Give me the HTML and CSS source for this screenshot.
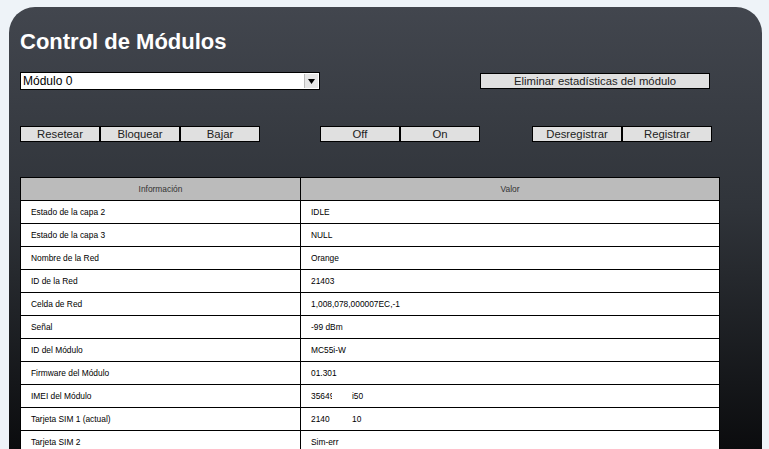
FILE: index.html
```html
<!DOCTYPE html>
<html lang="es">
<head>
<meta charset="utf-8">
<title>Control de Módulos</title>
<link rel="stylesheet" href="styles.css">
</head>
<body>
<div class="panel">
  <h1 class="title">Control de Módulos</h1>
  <div class="row-top">
    <div class="select">
      <span class="select-text">Módulo 0</span>
      <span class="select-btn"><svg width="7" height="5" viewBox="0 0 7 5"><path d="M0 0H7L3.5 5Z" fill="#000"/></svg></span>
    </div>
    <button class="btn btn-wide">Eliminar estadísticas del módulo</button>
  </div>
  <div class="row-btns">
    <div class="group">
      <button class="btn">Resetear</button><button class="btn">Bloquear</button><button class="btn">Bajar</button>
    </div>
    <div class="group g2">
      <button class="btn">Off</button><button class="btn">On</button>
    </div>
    <div class="group g3">
      <button class="btn btn-90">Desregistrar</button><button class="btn btn-90">Registrar</button>
    </div>
  </div>
  <table class="info">
    <thead>
      <tr><th class="c1">Información</th><th>Valor</th></tr>
    </thead>
    <tbody>
      <tr><td>Estado de la capa 2</td><td>IDLE</td></tr>
      <tr><td>Estado de la capa 3</td><td>NULL</td></tr>
      <tr><td>Nombre de la Red</td><td>Orange</td></tr>
      <tr><td>ID de la Red</td><td>21403</td></tr>
      <tr><td>Celda de Red</td><td>1,008,078,000007EC,-1</td></tr>
      <tr><td>Señal</td><td>-99 dBm</td></tr>
      <tr><td>ID del Módulo</td><td>MC55i-W</td></tr>
      <tr><td>Firmware del Módulo</td><td>01.301</td></tr>
      <tr><td>IMEI del Módulo</td><td><span class="cut">35649</span><span class="tail">i50</span></td></tr>
      <tr><td>Tarjeta SIM 1 (actual)</td><td><span class="cut2">2140</span><span class="tail">10</span></td></tr>
      <tr><td>Tarjeta SIM 2</td><td>Sim-err</td></tr>
    </tbody>
  </table>
</div>
</body>
</html>
```
FILE: styles.css
```css
html, body {
  margin: 0;
  padding: 0;
  background: #eef3f8;
  overflow: hidden;
}
body {
  font-family: "Liberation Sans", Arial, sans-serif;
}
.panel {
  margin: 7px 7px 0 9px;
  height: 470px;
  box-sizing: border-box;
  padding: 22px 0 0 11px;
  border-radius: 26px 26px 0 0;
  background: linear-gradient(#42464e 0px, #30343a 200px, #0b0c0e 442px);
}
.title {
  margin: 0;
  font-size: 22px;
  line-height: 25px;
  font-weight: bold;
  color: #fff;
}
.row-top {
  display: flex;
  align-items: flex-start;
  margin-top: 18px;
}
.select {
  width: 300px;
  height: 18px;
  box-sizing: border-box;
  border: 1px solid #000;
  background: #fff;
  display: flex;
  align-items: center;
  justify-content: space-between;
  padding: 0 1px 0 2px;
}
.select-text {
  font-size: 12px;
  color: #000;
}
.select-btn {
  width: 13px;
  height: 14px;
  background: #e6e6e6;
  border-left: 1px solid #bbb;
  display: flex;
  align-items: center;
  justify-content: center;
}
.btn {
  font-family: "Liberation Sans", Arial, sans-serif;
  font-size: 11.3px;
  color: #222;
  background: #e0e0e0;
  border: 1px solid #000;
  width: 80px;
  height: 16px;
  box-sizing: border-box;
  padding: 0;
  margin: 0;
  line-height: 14px;
  display: inline-block;
  vertical-align: top;
}
.btn-wide {
  width: 230px;
  margin-left: 160px;
  margin-top: 1px;
}
.btn-90 {
  width: 90px;
}
.row-btns {
  display: flex;
  margin-top: 36px;
}
.group {
  display: flex;
}
.g2 {
  margin-left: 60px;
}
.g3 {
  margin-left: 52px;
}
.info {
  margin-top: 35px;
  width: 700px;
  border-collapse: collapse;
  background: #fff;
  font-size: 8.4px;
  color: #000;
}
.info th, .info td {
  border: 1px solid #000;
  height: 23px;
  padding: 0 0 0 10px;
  box-sizing: border-box;
}
.info th {
  background: #bbbbbb;
  font-weight: normal;
  color: #333;
  text-align: center;
  padding: 0;
}
.info td {
  text-align: left;
}
.info .c1 {
  width: 280px;
}
.cut {
  display: inline-block;
  width: 21px;
  overflow: hidden;
  white-space: nowrap;
  vertical-align: bottom;
}
.cut2 {
  display: inline-block;
  width: 21px;
  vertical-align: bottom;
}
.tail {
  display: inline-block;
  margin-left: 20px;
  vertical-align: bottom;
}
```
